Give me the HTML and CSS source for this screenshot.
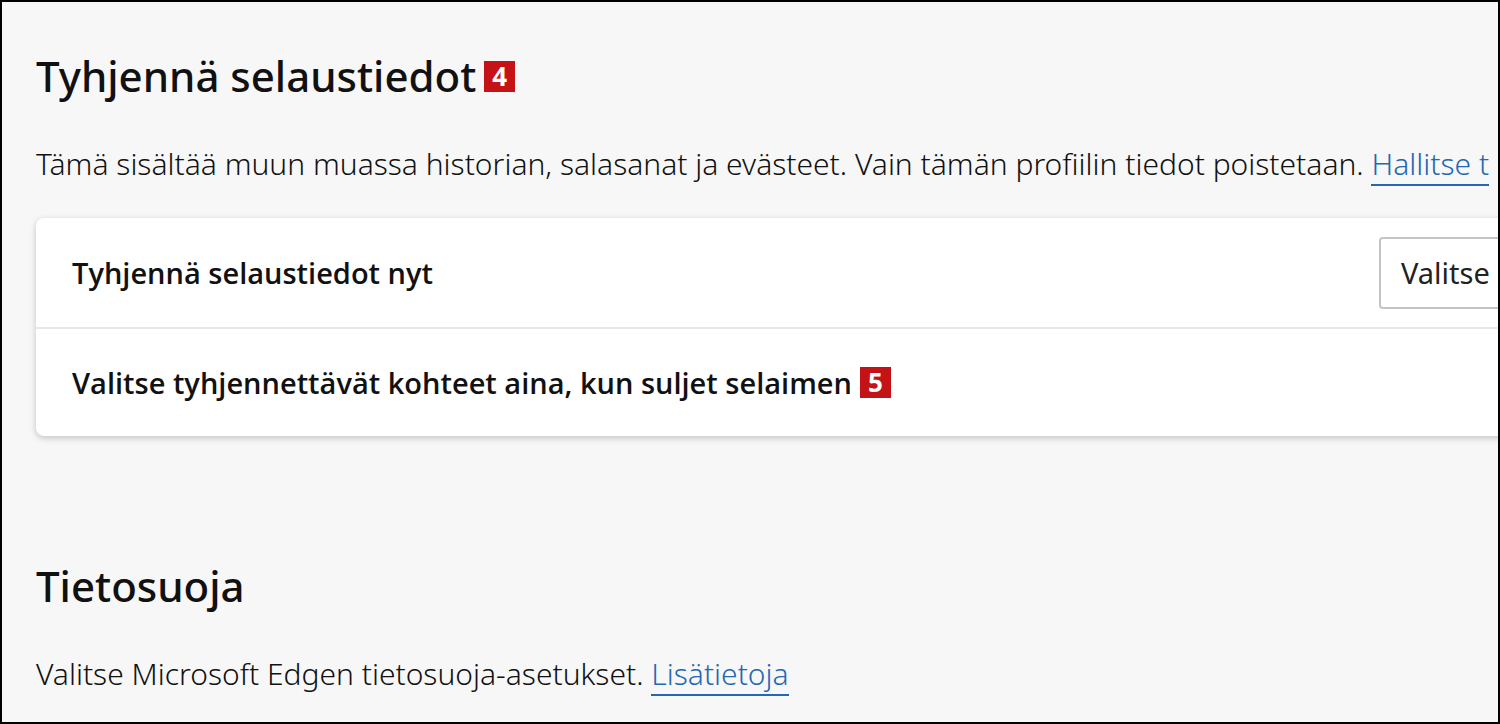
FILE: index.html
```html
<!DOCTYPE html>
<html lang="fi">
<head>
<meta charset="utf-8">
<title>Asetukset</title>
<link rel="stylesheet" href="styles.css">
</head>
<body>
<main class="page">
  <section class="section">
    <h2 class="title">Tyhjennä selaustiedot<span class="badge">4</span></h2>
    <p class="description">Tämä sisältää muun muassa historian, salasanat ja evästeet. Vain tämän profiilin tiedot poistetaan. <a class="link" href="#manage">Hallitse t</a></p>
    <div class="card">
      <div class="row">
        <span class="label">Tyhjennä selaustiedot nyt</span>
        <button class="button" type="button">Valitse</button>
      </div>
      <div class="row">
        <a class="label" href="#on-close">Valitse tyhjennettävät kohteet aina, kun suljet selaimen<span class="badge">5</span></a>
      </div>
    </div>
  </section>
  <section class="section">
    <h2 class="title">Tietosuoja</h2>
    <p class="description">Valitse Microsoft Edgen tietosuoja-asetukset. <a class="link" href="#more">Lisätietoja</a></p>
  </section>
</main>
</body>
</html>
```
FILE: styles.css
```css
* { box-sizing: border-box; }
body { margin: 0; }
.page {
  display: flex;
  flex-direction: column;
  gap: 122px;
  min-height: 100vh;
  padding: 46px 0 24px 34px;
  border: 2px solid #000;
  background: #f7f7f7;
  color: #111;
  font-family: "Segoe UI", "Noto Sans", "Open Sans", sans-serif;
  overflow: hidden;
}
.title {
  display: flex;
  align-items: center;
  gap: 8px;
  margin: 0;
  font-size: 42px;
  line-height: 56px;
  font-weight: 500;
}
.description {
  margin: 40px 0 0;
  color: #111;
  font-size: 30px;
  line-height: 40px;
  font-weight: 350;
  white-space: nowrap;
}
.link {
  color: #2467b3;
  text-decoration: none;
  border-bottom: 2px solid #2467b3;
}
.card {
  margin: 34px -40px 0 0;
  border-radius: 8px;
  background: #fff;
  box-shadow: 0 2px 6px rgba(0, 0, 0, 0.22);
}
.row {
  display: flex;
  align-items: center;
  justify-content: space-between;
  min-height: 109px;
  padding-left: 36px;
}
.row + .row { border-top: 2px solid #e8e8e8; }
.label {
  display: flex;
  align-items: center;
  gap: 8px;
  color: inherit;
  font-family: "Segoe UI", "Open Sans", sans-serif;
  font-size: 29px;
  line-height: 40px;
  font-weight: 600;
  text-decoration: none;
}
.button {
  width: 159px;
  height: 72px;
  padding: 0 20px;
  border: 2px solid #c4c4c4;
  border-radius: 4px;
  background: #fff;
  color: #222;
  font: inherit;
  font-size: 29px;
  text-align: left;
  white-space: nowrap;
}
.badge {
  display: grid;
  place-items: center;
  width: 31px;
  height: 31px;
  background: #c41216;
  color: #fff;
  font-size: 26px;
  line-height: 31px;
  font-weight: 700;
}
```
